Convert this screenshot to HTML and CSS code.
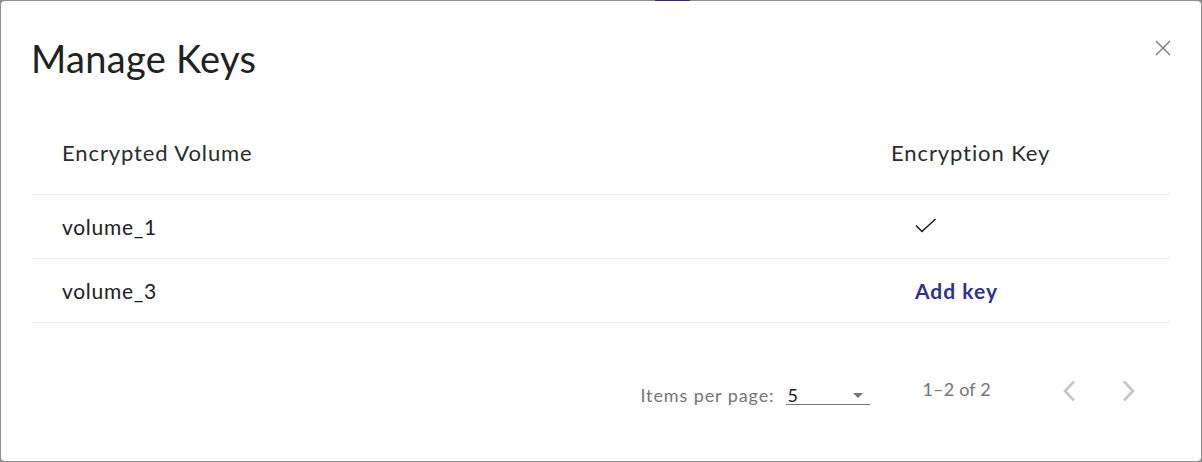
FILE: index.html
```html
<!DOCTYPE html>
<html lang="en">
<head>
<meta charset="utf-8">
<title>Manage Keys</title>
<link rel="stylesheet" href="styles.css">
</head>
<body>
<div class="backdrop-peek"></div>
<div class="dialog">
  <div class="dialog-header">
    <h2 class="dialog-title">Manage Keys</h2>
    <button class="close-btn" aria-label="Close">
      <svg width="16" height="16" viewBox="0 0 16 16"><path d="M1 1 L15 15 M15 1 L1 15" stroke="#7a7a7a" stroke-width="1.4" fill="none"/></svg>
    </button>
  </div>
  <div class="table">
    <div class="row head">
      <div class="cell c1">Encrypted Volume</div>
      <div class="cell c2">Encryption Key</div>
    </div>
    <div class="row">
      <div class="cell c1">volume_1</div>
      <div class="cell c2 val">
        <svg class="check" width="22" height="16" viewBox="0 0 22 16"><polyline points="1,7.5 7,13.5 20.5,1" stroke="#111" stroke-width="1.4" fill="none"/></svg>
      </div>
    </div>
    <div class="row">
      <div class="cell c1">volume_3</div>
      <div class="cell c2 val"><a class="add-key" href="#">Add key</a></div>
    </div>
  </div>
  <div class="paginator">
    <div class="pg-size">
      <span class="pg-label">Items per page:</span>
      <div class="pg-select">
        <span class="pg-value">5</span>
        <svg class="pg-arrow" width="10" height="5" viewBox="0 0 10 5"><path d="M0 0 L10 0 L5 5 Z" fill="#757575"/></svg>
      </div>
    </div>
    <span class="pg-range">1–2 of 2</span>
    <button class="pg-btn" aria-label="Previous page">
      <svg width="14" height="22" viewBox="0 0 14 22"><polyline points="12,1.5 3,11 12,20.5" stroke="#c6c6c6" stroke-width="2.6" fill="none"/></svg>
    </button>
    <button class="pg-btn" aria-label="Next page">
      <svg width="14" height="22" viewBox="0 0 14 22"><polyline points="2,1.5 11,11 2,20.5" stroke="#c6c6c6" stroke-width="2.6" fill="none"/></svg>
    </button>
  </div>
</div>
</body>
</html>
```
FILE: styles.css
```css
html, body {
  margin: 0;
  padding: 0;
}
body {
  background: #8f8f8f;
  width: 1202px;
  height: 462px;
  position: relative;
  overflow: hidden;
  font-family: Lato, "Noto Sans", sans-serif;
}
.backdrop-peek {
  position: absolute;
  left: 655px;
  top: 0;
  width: 35px;
  height: 1px;
  background: #2a2f6e;
}
.dialog {
  margin: 1px 0 0 1px;
  width: 1200px;
  height: 460px;
  box-sizing: border-box;
  background: #fff;
  border-radius: 4px;
  padding: 0 31px;
  display: flex;
  flex-direction: column;
}
.dialog-header {
  display: flex;
  justify-content: space-between;
  align-items: flex-start;
  height: 116px;
}
.dialog-title {
  margin: 33px 0 0 -1px;
  font-size: 38px;
  font-weight: 400;
  color: #212121;
  line-height: 48px;
  letter-spacing: 0.3px;
}
.close-btn {
  margin-top: 39px;
  margin-right: -1px;
  padding: 0;
  border: none;
  background: none;
  width: 16px;
  height: 16px;
  display: flex;
}
.table {
  display: flex;
  flex-direction: column;
}
.row {
  display: flex;
  align-items: center;
  border-bottom: 1px solid #ececec;
  font-size: 21px;
  letter-spacing: 0.7px;
  color: #212121;
}
.row.head {
  height: 78px;
  font-size: 22px;
  letter-spacing: 0.9px;
  color: #2b2b2b;
  padding-bottom: 7px;
  box-sizing: border-box;
}
.row:not(.head) {
  height: 64px;
  box-sizing: border-box;
}
.cell.c1 {
  flex: 0 0 859px;
  padding-left: 30px;
  box-sizing: border-box;
}
.cell.c2 {
  flex: 1;
}
.cell.c2.val {
  padding-left: 24px;
  display: flex;
  align-items: center;
}
.check {
  margin-top: -2px;
}
.add-key {
  color: #2e3192;
  font-weight: 700;
  text-decoration: none;
  font-size: 21px;
  letter-spacing: 1px;
}
.paginator {
  margin-top: 40px;
  height: 56px;
  display: flex;
  align-items: center;
  justify-content: flex-end;
  font-size: 18px;
  color: #757575;
}
.pg-size {
  display: flex;
  align-items: flex-end;
  margin-top: 6px;
}
.pg-label {
  margin-right: 12px;
  letter-spacing: 0.9px;
  line-height: 18px;
  margin-bottom: 1px;
}
.pg-select {
  width: 84px;
  height: 22px;
  border-bottom: 1px solid #757575;
  box-sizing: border-box;
  display: flex;
  align-items: flex-end;
  justify-content: space-between;
  padding: 0 7px 0 1px;
}
.pg-value {
  color: #212121;
  line-height: 18px;
}
.pg-arrow {
  margin-bottom: 6px;
}
.pg-range {
  margin-left: 52px;
  margin-right: 58px;
  margin-top: -4px;
  letter-spacing: 0.2px;
}
.pg-btn {
  border: none;
  background: none;
  padding: 0;
  width: 40px;
  height: 40px;
  display: flex;
  align-items: center;
  justify-content: center;
}
.pg-btn + .pg-btn {
  margin-left: 20px;
  margin-right: 21px;
}
```
